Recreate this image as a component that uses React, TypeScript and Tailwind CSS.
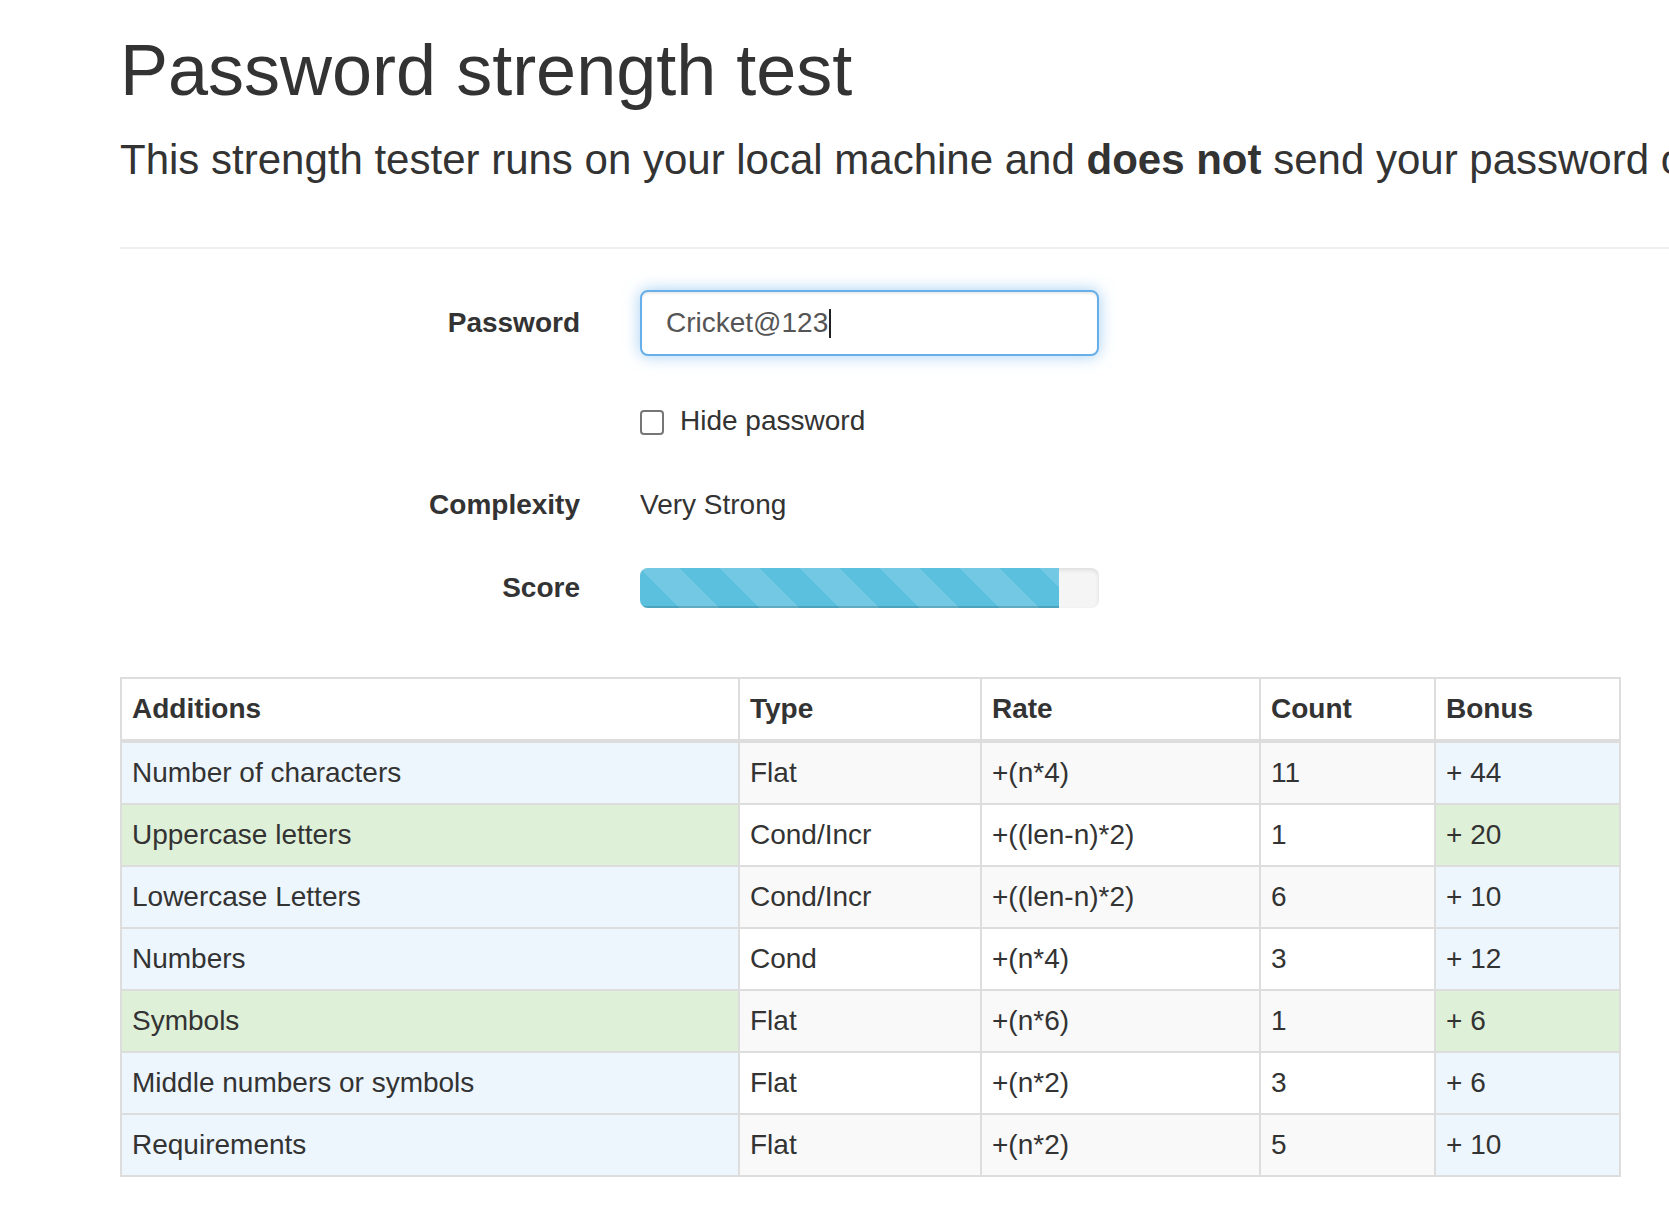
type Tone = "info" | "success";

const rows: { name: string; type: string; rate: string; count: string; bonus: string; tone: Tone }[] = [
  { name: "Number of characters", type: "Flat", rate: "+(n*4)", count: "11", bonus: "+ 44", tone: "info" },
  { name: "Uppercase letters", type: "Cond/Incr", rate: "+((len-n)*2)", count: "1", bonus: "+ 20", tone: "success" },
  { name: "Lowercase Letters", type: "Cond/Incr", rate: "+((len-n)*2)", count: "6", bonus: "+ 10", tone: "info" },
  { name: "Numbers", type: "Cond", rate: "+(n*4)", count: "3", bonus: "+ 12", tone: "info" },
  { name: "Symbols", type: "Flat", rate: "+(n*6)", count: "1", bonus: "+ 6", tone: "success" },
  { name: "Middle numbers or symbols", type: "Flat", rate: "+(n*2)", count: "3", bonus: "+ 6", tone: "info" },
  { name: "Requirements", type: "Flat", rate: "+(n*2)", count: "5", bonus: "+ 10", tone: "info" },
];

const toneBg: Record<Tone, string> = {
  info: "bg-[#eef6fd]",
  success: "bg-[#dff0d8]",
};

function FormRow({ label, children }: { label?: string; children: React.ReactNode }) {
  return (
    <div className="flex items-center">
      <div className="w-[460px] shrink-0 text-right font-bold text-[28px] leading-[40px]">{label}</div>
      <div className="ml-[60px] w-[459px]">{children}</div>
    </div>
  );
}

export default function App() {
  return (
    <div className="w-full h-[1214px] overflow-hidden bg-white text-[#333] font-['Liberation_Sans',Arial,sans-serif]">
      <div className="pl-[120px]">
        {/* page header */}
        <div className="pt-[31px] pb-[57px] border-b-2 border-[#eee] whitespace-nowrap">
          <h1 className="text-[72px] leading-[79.2px] font-normal">Password strength test</h1>
          <p className="mt-[20px] text-[42px] leading-[60px] font-light">
            This strength tester runs on your local machine and <strong className="font-bold">does not</strong> send
            your password over the network.
          </p>
        </div>

        {/* form */}
        <div className="mt-[41px] flex flex-col">
          <FormRow label="Password">
            <div className="h-[66px] flex items-center px-[24px] border-2 border-[#66afe9] rounded-[8px] bg-white text-[28px] leading-[40px] text-[#555] shadow-[inset_0_2px_2px_rgba(0,0,0,0.075),0_0_16px_rgba(102,175,233,0.6)]">
              <span>Cricket@123</span>
              <span className="ml-[1px] inline-block w-[2px] h-[29px] bg-[#222]" />
            </div>
          </FormRow>

          <div className="mt-[45px]">
            <FormRow>
              <label className="flex items-center gap-[16px] text-[28px] leading-[40px]">
                <span className="mt-[3px] w-[24px] h-[25px] border-2 border-[#767676] rounded-[4px] bg-white" />
                Hide password
              </label>
            </FormRow>
          </div>

          <div className="mt-[44px]">
            <FormRow label="Complexity">
              <div className="text-[28px] leading-[40px]">Very Strong</div>
            </FormRow>
          </div>

          <div className="mt-[43px]">
            <FormRow label="Score">
              <div className="h-[40px] rounded-[8px] bg-[#f5f5f5] overflow-hidden shadow-[inset_0_2px_4px_rgba(0,0,0,0.1)]">
                <div className="h-full w-[91.3%] bg-[#5bc0de] bg-[linear-gradient(45deg,rgba(255,255,255,0.15)_25%,transparent_25%,transparent_50%,rgba(255,255,255,0.15)_50%,rgba(255,255,255,0.15)_75%,transparent_75%,transparent)] bg-[length:80px_80px] shadow-[inset_0_-2px_0_rgba(0,0,0,0.15)]" />
              </div>
            </FormRow>
          </div>
        </div>

        {/* additions table */}
        <table className="mt-[69px] w-[1499px] table-fixed border-collapse border-2 border-[#ddd] text-[28px] leading-[40px]">
          <colgroup>
            <col className="w-[618px]" />
            <col className="w-[242px]" />
            <col className="w-[279px]" />
            <col className="w-[175px]" />
            <col className="w-[185px]" />
          </colgroup>
          <thead>
            <tr>
              {["Additions", "Type", "Rate", "Count", "Bonus"].map((h) => (
                <th key={h} className="p-[10px] text-left font-bold border-2 border-b-4 border-[#ddd]">
                  {h}
                </th>
              ))}
            </tr>
          </thead>
          <tbody>
            {rows.map((r, i) => {
              const mid = i % 2 === 0 ? "bg-[#f9f9f9]" : "bg-white";
              return (
                <tr key={r.name}>
                  <td className={`p-[10px] border-2 border-[#ddd] ${toneBg[r.tone]}`}>{r.name}</td>
                  <td className={`p-[10px] border-2 border-[#ddd] ${mid}`}>{r.type}</td>
                  <td className={`p-[10px] border-2 border-[#ddd] ${mid}`}>{r.rate}</td>
                  <td className={`p-[10px] border-2 border-[#ddd] ${mid}`}>{r.count}</td>
                  <td className={`p-[10px] border-2 border-[#ddd] ${toneBg[r.tone]}`}>{r.bonus}</td>
                </tr>
              );
            })}
          </tbody>
        </table>
      </div>
    </div>
  );
}
